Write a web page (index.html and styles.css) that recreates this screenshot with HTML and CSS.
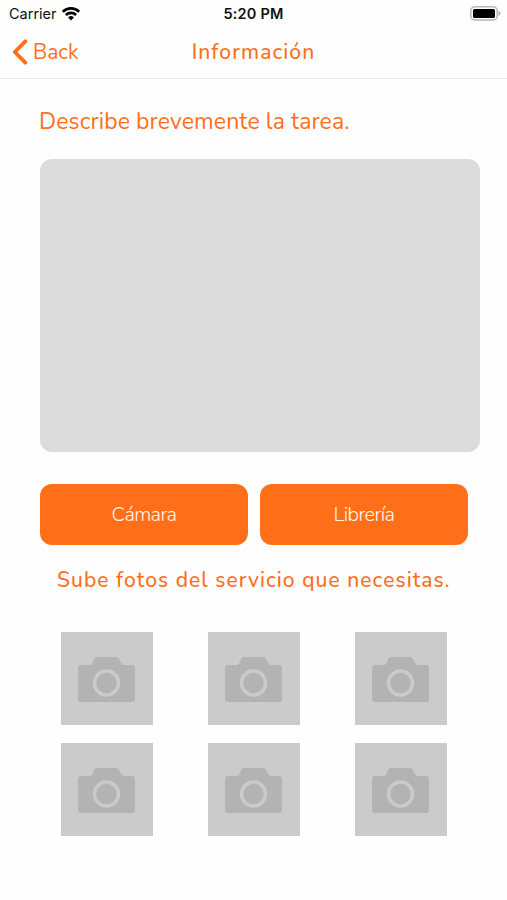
FILE: index.html
```
<!DOCTYPE html>
<html lang="es">
<head>
  <meta charset="UTF-8">
  <title>Información</title>
  <link rel="stylesheet" href="styles.css">
</head>
<body>
  <svg class="symbols" width="0" height="0">
    <symbol id="camera" viewBox="0 0 57 46">
      <path fill="#b3b3b3" d="M3 9h9q2 0 2.500-2l1.500-4q1-2 3-2h19q2 0 3 2l2 4q1 2 3 2h8q3 0 3 3v31q0 3-3 3H3q-3 0-3-3V12q0-3 3-3z"/>
      <circle cx="28.500" cy="27" r="12" fill="none" stroke="#cacaca" stroke-width="3.500"/>
    </symbol>
  </svg>

  <header class="header">
    <div class="status-bar">
      <div class="carrier">
        <span>Carrier</span>
        <svg width="18" height="14" viewBox="0 0 18 14">
          <g fill="none" stroke="#000" stroke-width="2.600">
            <path d="M.8 4.700a11.700 11.700 0 0 1 16.400 0"/>
            <path d="M3.900 8a7.300 7.300 0 0 1 10.200 0"/>
          </g>
          <path d="M9 13.500L6.100 10.500a4.100 4.100 0 0 1 5.800 0z"/>
        </svg>
      </div>
      <span class="time">5:20 PM</span>
      <svg class="battery" width="31" height="15" viewBox="0 0 31 15">
        <rect x=".8" y=".8" width="26.400" height="13.200" rx="4" fill="#fff" stroke="#b5b5b5" stroke-width="1.500"/>
        <rect x="3" y="3" width="22" height="9" rx="1.500"/>
        <path fill="#aaa" d="M28.500 5q2 .8 2 2.400t-2 2.400z"/>
      </svg>
    </div>
    <nav class="nav-bar">
      <a class="back">
        <svg width="16" height="26" viewBox="0 0 16 26">
          <path d="M13.300 2.300L2.800 13l10.500 10.700" fill="none" stroke="#ff6f19" stroke-width="3.800" stroke-linecap="round" stroke-linejoin="round"/>
        </svg>
        <span>Back</span>
      </a>
      <h1>Información</h1>
    </nav>
  </header>

  <main class="content">
    <label class="task-label" for="task">Describe brevemente la tarea.</label>
    <textarea class="task" id="task"></textarea>

    <div class="buttons">
      <button class="camera-button">Cámara</button>
      <button class="library-button">Librería</button>
    </div>

    <h2>Sube fotos del servicio que necesitas.</h2>

    <div class="photos">
      <div class="photo"><svg><use href="#camera"/></svg></div>
      <div class="photo"><svg><use href="#camera"/></svg></div>
      <div class="photo"><svg><use href="#camera"/></svg></div>
      <div class="photo"><svg><use href="#camera"/></svg></div>
      <div class="photo"><svg><use href="#camera"/></svg></div>
      <div class="photo"><svg><use href="#camera"/></svg></div>
    </div>
  </main>
</body>
</html>
```
FILE: styles.css
```
* {
  box-sizing: border-box;
}
body {
  margin: 0;
  background: #fefefe;
  font-family: Nunito, Lato, sans-serif;
  color: #ff6f19;
}
.symbols {
  display: block;
}
.header {
  height: 79px;
  border-bottom: 1px solid #e8e8e8;
}
.status-bar {
  display: grid;
  grid-template-columns: 1fr auto 1fr;
  align-items: center;
  height: 27px;
  padding: 0 6px 0 9px;
  font-family: Inter, sans-serif;
  font-size: 14.500px;
  color: #111;
}
.carrier {
  display: flex;
  align-items: center;
  gap: 5px;
}
.time {
  margin-right: 3px;
  font-weight: 600;
  letter-spacing: 0.200px;
}
.battery {
  justify-self: end;
}
.nav-bar {
  display: grid;
  grid-template-columns: 1fr auto 1fr;
  align-items: center;
  height: 50px;
  padding: 0 12px;
}
.back {
  display: flex;
  align-items: center;
  gap: 5px;
  font-size: 21px;
}
h1 {
  margin: 0;
  font-size: 21px;
  font-weight: 500;
  letter-spacing: 1.100px;
}
.content {
  padding: 27px 27px 0 40px;
}
.task-label {
  display: block;
  height: 32px;
  margin-left: -1px;
  line-height: 32px;
  font-size: 23px;
  letter-spacing: 0.100px;
  white-space: nowrap;
}
.task {
  display: block;
  width: 440px;
  height: 293px;
  margin-top: 21px;
  border: none;
  border-radius: 12px;
  background: #dcdcdc;
  resize: none;
}
.buttons {
  display: flex;
  gap: 12px;
  width: 428px;
  margin-top: 32px;
}
button {
  flex: 1;
  height: 61px;
  padding: 0;
  border: none;
  border-radius: 12px;
  background: #ff6f19;
  color: #fff6ee;
  font-family: inherit;
  font-size: 20px;
  font-weight: 350;
  letter-spacing: -0.600px;
  cursor: pointer;
}
h2 {
  height: 30px;
  margin: 20px 0 0 17px;
  line-height: 30px;
  font-size: 21px;
  font-weight: 500;
  letter-spacing: 1.050px;
  white-space: nowrap;
}
.photos {
  display: grid;
  grid-template-columns: repeat(3, 92px);
  gap: 18px 55px;
  margin: 37px 0 0 21px;
}
.photo {
  display: flex;
  align-items: center;
  justify-content: center;
  height: 93px;
  padding-right: 2px;
  background: #cbcbcb;
}
.photo svg {
  width: 57px;
  height: 46px;
}
```
